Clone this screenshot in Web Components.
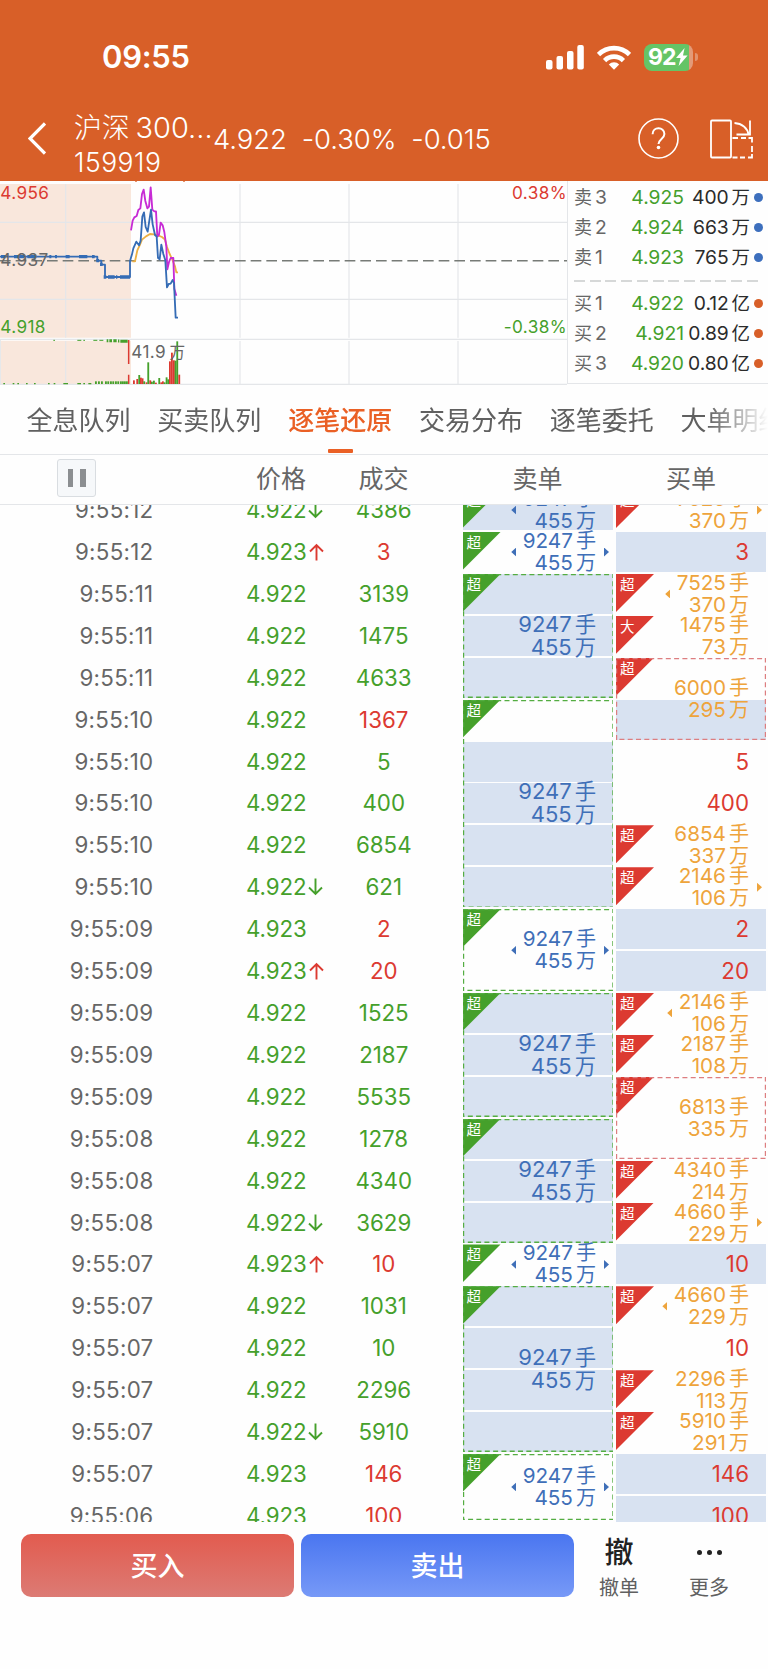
<!DOCTYPE html>
<html lang="zh-CN">
<head>
<meta charset="utf-8">
<title>159919</title>
<style>
  html, body {
    margin: 0;
    background: #fefefe;
  }

  body {
    width: 768px;
    height: 1669px;
    overflow: hidden;
    font-family: Inter, "Noto Sans CJK SC", sans-serif;
    --up: #dc3a31;
    --down: #45a02b;
    --ink: #666;
    --sell: #3f6fb8;
    --buy: #eea43c;
    --band: #d8e2f1;
    --line: #e4e6e9;
    --brand: #d85f28;
  }
</style>
</head>
<body>
<trade-page></trade-page>

<script>
class StatusBar extends HTMLElement {
  constructor() {
    super();
    this.attachShadow({ mode: 'open' });
    this.shadowRoot.innerHTML = `
      <style>
        :host {
          display: flex;
          align-items: center;
          height: 52px;
          padding: 31px 70px 0 102px;
          color: #fff;
        }
        .time {
          flex: 1;
          font-size: 31px;
          font-weight: 600;
          letter-spacing: -0.3px;
          line-height: 52px;
        }
        .signal { margin-right: 13px; }
        .wifi { margin-right: 13px; }
        .battery {
          display: flex;
          align-items: center;
          width: 49px;
          height: 27px;
          border-radius: 8px;
          background: linear-gradient(90deg, #65c466 0 45px, #e39a78 45px);
          font-size: 23px;
          font-weight: 700;
          letter-spacing: -0.9px;
          line-height: 27px;
          text-indent: 4px;
        }
        .cap {
          width: 3px;
          height: 8px;
          margin-left: 2px;
          border-radius: 0 3px 3px 0;
          background: #e2926d;
        }
      </style>
      <span class="time">09:55</span>
      <svg class="signal" width="38" height="25" fill="#fff">
        <rect x="0" y="15" width="6.5" height="9.5" rx="2"/>
        <rect x="10.5" y="11" width="6.5" height="13.5" rx="2"/>
        <rect x="21" y="6" width="6.5" height="18.5" rx="2"/>
        <rect x="31.3" y="0" width="6.5" height="24.5" rx="2"/>
      </svg>
      <svg class="wifi" width="34" height="25" fill="none" stroke="#fff" stroke-width="4.6">
        <path d="M1.5 9.6a21.8 21.8 0 0 1 31 0"/>
        <path d="M7.6 15.6a13.2 13.2 0 0 1 18.8 0"/>
        <path d="M17 24.8l-5.2-5.3a7.4 7.4 0 0 1 10.4 0z" fill="#fff" stroke="none"/>
      </svg>
      <span class="battery">92<svg width="12" height="18" viewBox="0 0 12 18"><path d="M8.6 0L0 10h4.6L2.6 18 11.6 7.4H7z" fill="#fff"/></svg></span>
      <span class="cap"></span>
    `;
  }
}
customElements.define('status-bar', StatusBar);

class StockHeader extends HTMLElement {
  constructor() {
    super();
    this.attachShadow({ mode: 'open' });
    this.shadowRoot.innerHTML = `
      <style>
        :host {
          display: flex;
          align-items: center;
          height: 98px;
          padding: 0 15.5px 0 28px;
          color: #fff;
          font-weight: 300;
        }
        .back { margin: 12px 28px 0 0; }
        .name {
          width: 139px;
          padding-top: 25px;
          white-space: nowrap;
        }
        .title {
          height: 35px;
          font-size: 28px;
          letter-spacing: -0.3px;
          line-height: 35px;
        }
        .title i {
          margin-left: 6px;
          font-size: 29px;
          font-style: normal;
          letter-spacing: 0;
        }
        .code {
          font-size: 26.5px;
          letter-spacing: 0.5px;
          line-height: 34px;
        }
        .quote {
          display: flex;
          flex: 1;
          gap: 15px;
          padding-top: 13px;
          font-size: 27.5px;
          line-height: 36px;
          letter-spacing: -0.1px;
        }
        .help { margin: 13px 31px 0 0; }
        .rotate { margin-top: 13px; }
      </style>
      <svg class="back" width="18" height="33" fill="none" stroke="#fff" stroke-width="3.2"><path d="M17 1.5L2 16.5l15 15"/></svg>
      <div class="name">
        <div class="title">沪深<i>300...</i></div>
        <div class="code">159919</div>
      </div>
      <div class="quote"><span>4.922</span><span>-0.30%</span><span>-0.015</span></div>
      <svg class="help" width="41" height="41" fill="none" stroke="#fff">
        <circle cx="20.5" cy="20.5" r="19.5" stroke-width="1.6"/>
        <path d="M14.6 16.2c0-7.8 11.8-7.8 11.8-.3 0 5-5.9 5-5.9 10.2" stroke-width="2"/>
        <circle cx="20.5" cy="29.5" r="1.8" fill="#fff" stroke="none"/>
      </svg>
      <svg class="rotate" width="43" height="40" fill="none" stroke="#fff" stroke-width="1.8">
        <rect x="1" y="1.5" width="20" height="37" rx="1"/>
        <path d="M24.5 4C32 4.5 37.5 9 38.5 15.5M40 1.5V15.5H26.5"/>
        <path d="M22.5 19H28M31 19H36M38.5 19H42V23.5M42 27v6M42 35v3.5H38M35 38.5h-5M27.5 38.5h-5"/>
      </svg>
    `;
  }
}
customElements.define('stock-header', StockHeader);

class MinuteChart extends HTMLElement {
  constructor() {
    super();
    this.attachShadow({ mode: 'open' });
    this.render();
  }

  render() {
    // volume bars: [x, height, colour]
    const bars = [
      [399, 11, 'u'], [409, 15, 'u'], [415, 27, 'd'], [420, 19, 'u'], [425, 17, 'u'],
      [430, 8, 'd'], [437, 5, 'u'], [442, 65, 'd'], [448, 11, 'u'], [453, 7, 'd'],
      [459, 10, 'd'], [465, 4, 'u'], [475, 18, 'd'], [481, 5, 'u'], [486, 8, 'u'],
      [491, 5, 'd'], [497, 20, 'd'], [502, 14, 'd'], [507, 68, 'u'], [513, 94, 'u'],
      [519, 71, 'u'], [524, 70, 'd'], [529, 128, 'd'], [535, 28, 'u']
    ];
    const pre = [285, 294, 303, 315, 322, 330, 337, 345, 352, 360, 366, 372, 378];
    const rect = ([x, h, c]) => `<rect class="${c}" x="${x}" y="${627 - h}" width="5.5" height="${h}"/>`;

    this.shadowRoot.innerHTML = `
      <style>
        :host { display: block; width: 567px; height: 204px; }
        svg { display: block; }
        text { font-size: 51.5px; letter-spacing: 1.2px; }
        .u { fill: var(--up); }
        .d { fill: var(--down); }
        .n { fill: var(--ink); }
        .grid { stroke: var(--line); stroke-width: 3.5; fill: none; }
        .plot { fill: none; stroke-width: 5.5; stroke-linejoin: round; }
      </style>
      <svg width="567" height="204" viewBox="0 18 1701 612">
        <path d="M0 27h393v461H0zM3 497h390v130H3z" fill="#f9e7dc"/>
        <path class="grid" d="M0 142H1701M0 373H1701M0 493H1701M0 628H1701M1 495V628
          M197 27V488M197 498V627M720 27V488M720 498V627M1047 27V488M1047 498V627M1374 27V488M1374 498V627"/>
        <path d="M0 257H1701" stroke="#777b77" stroke-width="4.5" stroke-dasharray="32 15"/>
        <path d="M408 18v3M552 18v3" stroke="#d85f28" stroke-width="4"/>
        <path class="plot" stroke="#ecb044" d="M397 259h8l7-33 7-15 7-17 12-10 12-7 12 1 12 3 12 5 9 8 6 22 8 21 8 17 8 20 4 18h5"/>
        <path class="plot" stroke="#c72bd5" d="M393 166l5-29 5-10 7-4 5-18 6-5 5-43 5-13 5 34 6 22 5-5 5-58 5 67 6 5h5l4 76 5-6 5-36 6 8 5 20 6 44 3 68 5-22 5-12h8l3 92 6 21"/>
        <path class="plot" stroke="#356cb5" d="M0 245H292V257H304V269H315V306H390V258l6-20 4-18 9-20 8 11 5-14 5-72 5-13 5 44 6 14 10-66 5 44 7 32 5 5 4 64 5 4 5-44 6 28 6 19 5 81 5-10 6-1 6-11 4 9 5 104h7"/>
        <path d="M3 245h14M42 245h30M82 245h25M148 245h6M165 245h6M197 245h12M237 245h25M276 245h8M289 257h8M300 268h8M311 306h8M324 306h20M348 306h4M360 306h30" stroke="#356cb5" stroke-width="10"/>
        <path d="M160 496h5M232 496h12M250 496h5M280 496h12M298 496h12" stroke="#45a02b" stroke-width="3"/>
        <path d="M320 497h5M328 497h8M340 497h10M354 498h4M361 499h22" stroke="#45a02b" stroke-width="9"/>
        <path d="M386 495v72M386 599v28" stroke="#dc3a31" stroke-width="4.5"/>
        <path d="M10 626h5M38 626h5M52 626h5M78 626h5M102 626h5M144 626h5M161 626h5M190 626h14M232 626h11M250 626h5M265 626h9" stroke="#45a02b" stroke-width="4"/>
        ${pre.map(x => rect([x, 8, 'd'])).join('')}
        ${bars.map(rect).join('')}
        <text class="u" x="1" y="73">4.956</text>
        <text class="n" x="1" y="274">4.937</text>
        <text class="d" x="1" y="474">4.918</text>
        <text class="u" x="1701" y="73" text-anchor="end">0.38%</text>
        <text class="d" x="1701" y="474" text-anchor="end">-0.38%</text>
        <text class="n" x="394" y="550">41.9<tspan dx="10" font-size="47">万</tspan></text>
      </svg>
    `;
  }
}
customElements.define('minute-chart', MinuteChart);

class BookLevel extends HTMLElement {
  constructor() {
    super();
    this.attachShadow({ mode: 'open' });
  }

  connectedCallback() {
    const [side, level, price, amount, unit] = this.getAttribute('level').split(' ');
    this.shadowRoot.innerHTML = `
      <style>
        :host {
          display: flex;
          align-items: center;
          height: 29.7px;
          font-size: 19.3px;
          line-height: 29px;
          letter-spacing: -0.1px;
          white-space: nowrap;
        }
        .label { width: 36px; color: var(--ink); }
        .price { width: 74px; text-align: right; color: var(--down); letter-spacing: 0; }
        .amount { width: 66px; text-align: right; color: #2b2b2b; }
        i { font-style: normal; font-size: 18.5px; margin-left: 3px; }
        .label b { font-weight: 400; font-size: 18px; margin-right: 3px; }
        .dot {
          width: 9px;
          height: 9px;
          margin-left: 3.5px;
          border-radius: 50%;
          background: ${side === '卖' ? '#3d6fbd' : 'var(--brand)'};
        }
      </style>
      <span class="label"><b>${side}</b>${level}</span>
      <span class="price">${price}</span>
      <span class="amount">${amount}<i>${unit}</i></span>
      <span class="dot"></span>
    `;
  }
}
customElements.define('book-level', BookLevel);

class OrderBook extends HTMLElement {
  constructor() {
    super();
    this.attachShadow({ mode: 'open' });
    this.shadowRoot.innerHTML = `
      <style>
        :host {
          display: block;
          box-sizing: border-box;
          flex: 1;
          height: 203px;
          padding: 2px 0 0 6px;
          border-left: 1px solid var(--line);
          border-bottom: 1px solid var(--line);
        }
        hr {
          width: 184px;
          height: 2px;
          margin: 8px 0 7px;
          border: 0;
          background: repeating-linear-gradient(90deg, #d6d8d8 0 11px, transparent 11px 15.7px);
        }
      </style>
      <book-level level="卖 3 4.925 400 万"></book-level>
      <book-level level="卖 2 4.924 663 万"></book-level>
      <book-level level="卖 1 4.923 765 万"></book-level>
      <hr>
      <book-level level="买 1 4.922 0.12 亿"></book-level>
      <book-level level="买 2 4.921 0.89 亿"></book-level>
      <book-level level="买 3 4.920 0.80 亿"></book-level>
    `;
  }
}
customElements.define('order-book', OrderBook);

class TabItem extends HTMLElement {
  constructor() {
    super();
    this.attachShadow({ mode: 'open' });
    this.shadowRoot.innerHTML = `
      <style>
        :host {
          display: flex;
          flex-direction: column;
          align-items: center;
          flex: none;
          height: 100%;
          font-size: 26px;
          line-height: 74px;
          color: #606060;
        }
        :host([active]) { color: #ea6025; font-weight: 500; }
        .bar { width: 25px; height: 4px; margin-top: -9.5px; border-radius: 1px; }
        :host([active]) .bar { background: #ea6025; }
      </style>
      <span><slot></slot></span>
      <span class="bar"></span>
    `;
  }
}
customElements.define('tab-item', TabItem);

class TabStrip extends HTMLElement {
  constructor() {
    super();
    this.attachShadow({ mode: 'open' });
    this.shadowRoot.innerHTML = `
      <style>
        :host {
          display: block;
          box-sizing: border-box;
          height: 70.5px;
          padding-left: 26.5px;
          border-bottom: 1px solid var(--line);
        }
        .scroll {
          display: flex;
          gap: 26.8px;
          width: 741px;
          height: 69px;
          overflow: hidden;
          mask-image: linear-gradient(90deg, #000 680px, transparent 741px);
        }
      </style>
      <div class="scroll"><slot></slot></div>
    `;
  }
}
customElements.define('tab-strip', TabStrip);

class TableHead extends HTMLElement {
  constructor() {
    super();
    this.attachShadow({ mode: 'open' });
    this.shadowRoot.innerHTML = `
      <style>
        :host {
          display: grid;
          grid-template-columns: 230px 102px 103px 205px 102px;
          align-items: center;
          box-sizing: border-box;
          height: 50px;
          border-bottom: 1px solid var(--line);
          font-size: 25px;
          line-height: 48px;
          color: var(--ink);
          text-align: center;
        }
        .pause {
          display: flex;
          align-items: center;
          justify-content: center;
          gap: 7px;
          box-sizing: border-box;
          width: 39px;
          height: 38px;
          margin: -2px 0 0 57px;
          border: 1.5px solid #d9dde1;
          border-radius: 3px;
          background: #f6f8fa;
        }
        .pause i { width: 5.5px; height: 18px; background: #8b8e91; }
      </style>
      <span class="pause"><i></i><i></i></span>
      <span>价格</span>
      <span>成交</span>
      <span>卖单</span>
      <span>买单</span>
    `;
  }
}
customElements.define('table-head', TableHead);

class OrderCell extends HTMLElement {
  constructor() {
    super();
    this.attachShadow({ mode: 'open' });
  }

  connectedCallback() {
    const side = this.getAttribute('side');
    const lots = this.getAttribute('lots');
    const worth = this.getAttribute('worth');
    const tag = this.getAttribute('tag') || '超';
    const arrows = this.getAttribute('arrows') || '';

    this.shadowRoot.innerHTML = `
      <style>
        :host {
          --c: var(--${side});
          position: relative;
          display: flex;
          align-items: center;
          justify-content: flex-end;
          gap: 6.5px;
          box-sizing: border-box;
          padding-right: 17px;
          color: var(--c);
          font-size: 20.7px;
          line-height: 21px;
          text-align: right;
          white-space: nowrap;
        }
        :host([large]) { font-size: 22px; line-height: 23px; }
        .text i { font-style: normal; font-size: 0.97em; margin-left: 3px; }
        .corner {
          position: absolute;
          left: 0;
          top: 0;
          width: 38px;
          height: 38px;
          background: ${side === 'sell' ? 'var(--down)' : 'var(--up)'};
          clip-path: polygon(0 0, 100% 0, 0 100%);
          color: #fff;
          font-size: 14.5px;
          line-height: 21px;
          text-align: left;
          text-indent: 4px;
        }
        .frame {
          position: absolute;
          inset: 0;
          width: 100%;
          height: 100%;
        }
        .left, .right {
          width: 5px;
          height: 9px;
          background: var(--c);
          clip-path: polygon(100% 0, 100% 100%, 0 50%);
        }
        .right {
          position: absolute;
          right: 4.5px;
          top: calc(50% - 4.5px);
          transform: scaleX(-1);
        }
      </style>
      <span class="corner">${tag}</span>
      ${this.hasAttribute('framed') ? `<svg class="frame"><rect width="100%" height="100%" fill="none" stroke="${side === 'sell' ? '#54ad42' : '#dd7e80'}" stroke-width="2.4" stroke-dasharray="5 3.3"/></svg>` : ''}
      ${arrows.includes('l') ? '<span class="left"></span>' : ''}
      <span class="text">${lots}<i>手</i><br>${worth}<i>万</i></span>
      ${arrows.includes('r') ? '<span class="right"></span>' : ''}
    `;
  }
}
customElements.define('order-cell', OrderCell);

class TickList extends HTMLElement {
  constructor() {
    super();
    this.attachShadow({ mode: 'open' });
    this.render();
  }

  render() {
    // seconds, last digit of price, arrow, volume, buyer initiated
    const ticks = [
      ['12', 2, '↓', 4386, 0], ['12', 3, '↑', 3, 1], ['11', 2, '', 3139, 0], ['11', 2, '', 1475, 0],
      ['11', 2, '', 4633, 0], ['10', 2, '', 1367, 1], ['10', 2, '', 5, 0], ['10', 2, '', 400, 0],
      ['10', 2, '', 6854, 0], ['10', 2, '↓', 621, 0], ['09', 3, '', 2, 1], ['09', 3, '↑', 20, 1],
      ['09', 2, '', 1525, 0], ['09', 2, '', 2187, 0], ['09', 2, '', 5535, 0], ['08', 2, '', 1278, 0],
      ['08', 2, '', 4340, 0], ['08', 2, '↓', 3629, 0], ['07', 3, '↑', 10, 1], ['07', 2, '', 1031, 0],
      ['07', 2, '', 10, 0], ['07', 2, '', 2296, 0], ['07', 2, '↓', 5910, 0], ['07', 3, '', 146, 1],
      ['06', 3, '', 100, 1]
    ];
    // first row, rows covered, arrows
    const sells = [
      [0, 1, 'l'], [1, 1, 'lr'], [2, 3, ''], [5, 5, ''], [10, 2, 'lr'],
      [12, 3, ''], [15, 3, ''], [18, 1, 'lr'], [19, 4, ''], [23, 2, 'lr']
    ];
    // first row, rows covered, arrows, lots, worth, tag
    const buys = [
      [0, 1, 'r', 7525, 370, '超'], [2, 1, 'l', 7525, 370, '超'], [3, 1, '', 1475, 73, '大'],
      [4, 2, '', 6000, 295, '超'], [8, 1, '', 6854, 337, '超'], [9, 1, 'r', 2146, 106, '超'],
      [12, 1, 'l', 2146, 106, '超'], [13, 1, '', 2187, 108, '超'], [14, 2, '', 6813, 335, '超'],
      [16, 1, '', 4340, 214, '超'], [17, 1, 'r', 4660, 229, '超'], [19, 1, 'l', 4660, 229, '超'],
      [21, 1, '', 2296, 113, '超'], [22, 1, '', 5910, 291, '超']
    ];
    const smallBuys = { 1: 3, 6: 5, 7: 400, 10: 2, 11: 20, 18: 10, 20: 10, 23: 146, 24: 100 };

    // columns: time, price, volume, gutter, sell, gutter, buy
    const at = (row, span, col) => `grid-area: ${row + 1} / ${col} / span ${span} / span 1`;

    const rows = ticks.map(([sec, digit, arrow, volume, bought], r) => `
      <span class="time" style="${at(r, 1, 1)}">9:55:${sec}</span>
      <span class="price" style="${at(r, 1, 2)}">4.92${digit}${arrow ? this.arrow(arrow) : ''}</span>
      <span class="volume ${bought ? 'up' : ''}" style="${at(r, 1, 3)}">${volume}</span>
      <span class="band" style="${at(r, 1, bought ? 7 : 5)}"></span>
      ${smallBuys[r] ? `<span class="small" style="${at(r, 1, 7)}">${smallBuys[r]}</span>` : ''}
    `).join('');

    const sellCells = sells.map(([r, n, arrows]) => `
      <order-cell side="sell" lots="9247" worth="455" arrows="${arrows}"
        ${n > 1 ? 'framed' : ''} ${n > 2 ? 'large' : ''} ${r === 23 ? 'class="cut"' : ''}
        style="${at(r, n, 5)}"></order-cell>
    `).join('');

    const buyCells = buys.map(([r, n, arrows, lots, worth, tag]) => `
      <order-cell side="buy" lots="${lots}" worth="${worth}" tag="${tag}" arrows="${arrows}"
        ${n > 1 ? 'framed' : ''} style="${at(r, n, 7)}"></order-cell>
    `).join('');

    this.shadowRoot.innerHTML = `
      <style>
        :host { display: block; height: 1017.5px; overflow: hidden; }
        .grid {
          display: grid;
          grid-template-columns: 153.5px 175.5px 109.5px 24px 150.5px 3px 150px;
          grid-template-rows: repeat(25, 40px);
          row-gap: 1.92px;
          margin-top: -14.4px;
          font-size: 22.3px;
          line-height: 40px;
        }
        .time { text-align: right; color: var(--ink); letter-spacing: 0.3px; }
        .price {
          display: flex;
          align-items: center;
          padding-left: 92.5px;
          color: var(--down);
          letter-spacing: -0.1px;
        }
        .price svg { margin-left: 2px; }
        .volume { text-align: center; color: var(--down); }
        .up, .small { color: var(--up); }
        .small { padding-right: 17px; text-align: right; }
        .band { background: var(--band); }
        .cut { height: 66px; }
      </style>
      <div class="grid">${rows}${sellCells}${buyCells}</div>
    `;
  }

  arrow(kind) {
    return kind === '↑'
      ? '<svg width="15" height="18" fill="none" stroke="#dc3a31" stroke-width="1.9"><path d="M7.5 17.5V2M1 8.5l6.5-6.5L14 8.5"/></svg>'
      : '<svg width="15" height="18" fill="none" stroke="#45a02b" stroke-width="1.9"><path d="M7.5 .5V16M1 9.5l6.5 6.5L14 9.5"/></svg>';
  }
}
customElements.define('tick-list', TickList);

class TradeBar extends HTMLElement {
  constructor() {
    super();
    this.attachShadow({ mode: 'open' });
    this.shadowRoot.innerHTML = `
      <style>
        :host {
          display: flex;
          height: 63px;
          padding: 11.5px 0 0 21px;
        }
        .btn {
          width: 273px;
          margin-right: 7px;
          border-radius: 10px;
          color: #fff;
          font-size: 27px;
          font-weight: 500;
          line-height: 65px;
          text-align: center;
        }
        .buy { background: linear-gradient(#e25b4f, #dc7b74); }
        .sell { background: linear-gradient(#4a76f0, #7799f7); }
        .item {
          display: flex;
          flex-direction: column;
          align-items: center;
          width: 90px;
          font-size: 20px;
          color: #606060;
        }
        .item b {
          flex: none;
          height: 38px;
          font-size: 29px;
          font-weight: 500;
          line-height: 38px;
          color: #222;
        }
        .item span { flex: none; line-height: 32px; }
        .sell + .item { margin-left: -7px; }
        .dots { display: flex; align-items: center; gap: 5px; }
        .dots i { width: 5px; height: 5px; border-radius: 50%; background: #222; }
      </style>
      <div class="btn buy">买入</div>
      <div class="btn sell">卖出</div>
      <div class="item"><b>撤</b><span>撤单</span></div>
      <div class="item"><b class="dots"><i></i><i></i><i></i></b><span>更多</span></div>
    `;
  }
}
customElements.define('trade-bar', TradeBar);

class TradePage extends HTMLElement {
  constructor() {
    super();
    this.attachShadow({ mode: 'open' });
    this.shadowRoot.innerHTML = `
      <style>
        :host { display: block; width: 768px; }
        header { background: var(--brand); }
        .market { display: flex; height: 203px; }
      </style>
      <header>
        <status-bar></status-bar>
        <stock-header></stock-header>
      </header>
      <div class="market">
        <minute-chart></minute-chart>
        <order-book></order-book>
      </div>
      <tab-strip>
        <tab-item>全息队列</tab-item>
        <tab-item>买卖队列</tab-item>
        <tab-item active>逐笔还原</tab-item>
        <tab-item>交易分布</tab-item>
        <tab-item>逐笔委托</tab-item>
        <tab-item>大单明细</tab-item>
      </tab-strip>
      <table-head></table-head>
      <tick-list></tick-list>
      <trade-bar></trade-bar>
    `;
  }
}
customElements.define('trade-page', TradePage);
</script>
</body>
</html>
